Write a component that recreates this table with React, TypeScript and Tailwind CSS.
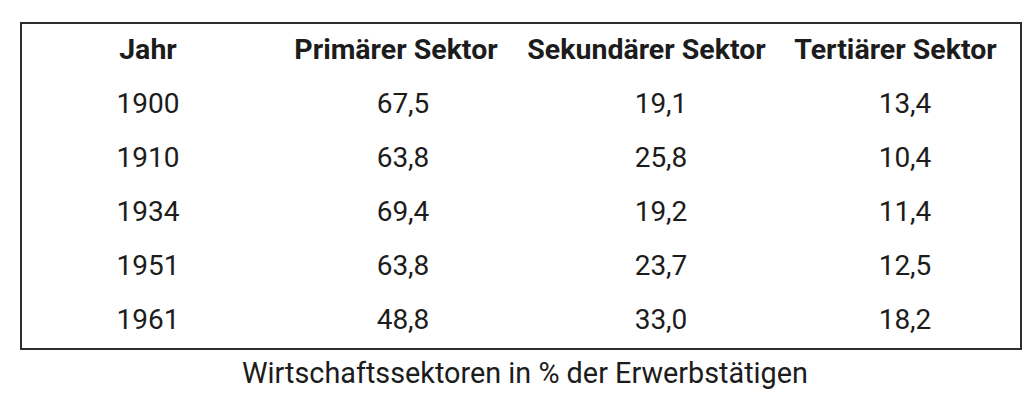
const rows: [string, string, string, string][] = [
  ["1900", "67,5", "19,1", "13,4"],
  ["1910", "63,8", "25,8", "10,4"],
  ["1934", "69,4", "19,2", "11,4"],
  ["1951", "63,8", "23,7", "12,5"],
  ["1961", "48,8", "33,0", "18,2"],
];

const cols = "grid grid-cols-[252px_258px_258px_230px]";

export default function App() {
  return (
    <div
      className="w-[1030px] h-[408px] bg-white text-[#1c1c1c] overflow-hidden"
      style={{ fontFamily: "Roboto, 'Liberation Sans', sans-serif" }}
    >
      <div className="ml-[20px] mt-[22px] w-[1002px] border-2 border-[#2e2e2e] pb-[1px]">
        {/* Kopfzeile */}
        <div className={`${cols} h-[53px] items-center text-[28.5px] font-bold whitespace-nowrap`}>
          <div className="flex justify-center">Jahr</div>
          <div className="flex justify-center pr-[14px]">Primärer Sektor</div>
          <div className="flex justify-center pr-[29px]">Sekundärer Sektor</div>
          <div className="flex justify-center pr-[19px]">Tertiärer Sektor</div>
        </div>
        {rows.map((r) => (
          <div key={r[0]} className={`${cols} h-[54px] items-center text-[28px]`}>
            {r.map((v, i) => (
              <div key={i} className="flex justify-center">
                {v}
              </div>
            ))}
          </div>
        ))}
      </div>
      <p className="mt-[6px] text-center text-[28.8px] leading-[34px] pl-[20px]">
        Wirtschaftssektoren in % der Erwerbstätigen
      </p>
    </div>
  );
}
